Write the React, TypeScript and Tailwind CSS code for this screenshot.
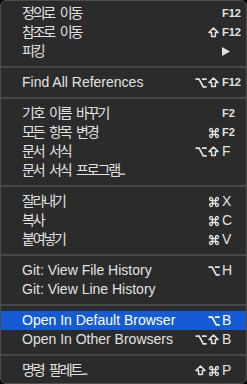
import { Command } from "lucide-react";

type Mod = "opt" | "shift" | "cmd";

type Item =
  | { sep: true }
  | {
      sep?: false;
      label: string;
      ko?: boolean;
      mods?: Mod[];
      keyName?: string;
      fkey?: boolean;
      submenu?: boolean;
      active?: boolean;
    };

const items: Item[] = [
  { label: "정의로 이동", ko: true, keyName: "F12", fkey: true },
  { label: "참조로 이동", ko: true, mods: ["shift"], keyName: "F12", fkey: true },
  { label: "피킹", ko: true, submenu: true },
  { sep: true },
  { label: "Find All References", mods: ["opt", "shift"], keyName: "F12", fkey: true },
  { sep: true },
  { label: "기호 이름 바꾸기", ko: true, keyName: "F2", fkey: true },
  { label: "모든 항목 변경", ko: true, mods: ["cmd"], keyName: "F2", fkey: true },
  { label: "문서 서식", ko: true, mods: ["opt", "shift"], keyName: "F" },
  { label: "문서 서식 프로그램...", ko: true },
  { sep: true },
  { label: "잘라내기", ko: true, mods: ["cmd"], keyName: "X" },
  { label: "복사", ko: true, mods: ["cmd"], keyName: "C" },
  { label: "붙여넣기", ko: true, mods: ["cmd"], keyName: "V" },
  { sep: true },
  { label: "Git: View File History", mods: ["opt"], keyName: "H" },
  { label: "Git: View Line History" },
  { sep: true },
  { label: "Open In Default Browser", mods: ["opt"], keyName: "B", active: true },
  { label: "Open In Other Browsers", mods: ["opt", "shift"], keyName: "B" },
  { sep: true },
  { label: "명령 팔레트...", ko: true, mods: ["shift", "cmd"], keyName: "P" },
];

function ModIcon({ mod }: { mod: Mod }) {
  if (mod === "cmd") return <Command size={12} strokeWidth={2.6} />;
  if (mod === "opt")
    return (
      <svg width="12" height="10" viewBox="0 0 12 10" fill="none" stroke="currentColor" strokeWidth="1.7">
        <path d="M0.5 1.2h3.6l4.2 7.6h3.4M7 1.2h4.7" />
      </svg>
    );
  return (
    <svg width="11" height="11" viewBox="0 0 11 11" fill="none" stroke="currentColor" strokeWidth="1.5" strokeLinejoin="round">
      <path d="M5.5 1 10 5.6H7.4v4H3.6v-4H1z" />
    </svg>
  );
}

export default function App() {
  return (
    <div className="w-[247px] h-[384px] bg-black">
      <div
        className="h-full rounded-[6px] border border-[#4e4e4e] bg-[#2b2b2b] py-[3px] text-[#e2e2e2] overflow-hidden"
        style={{ fontFamily: '"Liberation Sans", "Noto Sans CJK KR", sans-serif' }}
      >
        {items.map((it, i) =>
          it.sep ? (
            <div key={i} className="h-[12px] flex items-center">
              <div className="h-[2px] w-full bg-[#474747]" />
            </div>
          ) : (
            <div
              key={i}
              className={`h-[19px] flex items-center pl-[21px] pr-[5px] ${it.active ? "bg-[#155bd5] text-white" : ""}`}
            >
              <span
                className={`flex-1 whitespace-nowrap text-[14px] ${it.ko ? "tracking-[-2.2px] [word-spacing:4px]" : ""}`}
              >
                {it.label}
              </span>
              {it.submenu && (
                <svg width="8" height="9" viewBox="0 0 8 9" className="mr-[11px]">
                  <path d="M0 0 8 4.5 0 9z" fill="currentColor" />
                </svg>
              )}
              {it.keyName && (
                <div className="flex items-center">
                  <div className="flex items-center">
                    {(it.mods ?? []).map((m) => (
                      <span key={m} className="w-[13px] flex justify-center">
                        <ModIcon mod={m} />
                      </span>
                    ))}
                  </div>
                  <span
                    className={`w-[19px] ml-[2px] whitespace-nowrap ${it.fkey ? "text-[11px] font-bold" : "text-[14px]"}`}
                  >
                    {it.keyName}
                  </span>
                </div>
              )}
            </div>
          )
        )}
      </div>
    </div>
  );
}
